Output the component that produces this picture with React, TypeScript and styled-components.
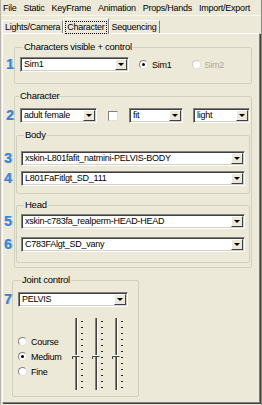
import React from 'react';
import styled, { createGlobalStyle } from 'styled-components';

const GlobalStyle = createGlobalStyle`
  html, body {
    margin: 0;
    padding: 0;
    background: #ece9d8;
  }
  body {
    font-family: "Liberation Sans", Arial, sans-serif;
    font-size: 9px;
    letter-spacing: -0.25px;
    color: #000;
  }
`;

const Window = styled.div`
  width: 262px;
  height: 405px;
  box-sizing: border-box;
  background: #ece9d8;
  border-left: 1px solid #b8b5a8;
  border-right: 1px solid #8a877c;
  display: flex;
  flex-direction: column;
  overflow: hidden;
`;

const MenuBar = styled.div`
  height: 15px;
  display: flex;
  align-items: center;
  gap: 7px;
  padding-left: 2px;
  border-bottom: 1px solid #f7f6f0;
`;

const MenuItem = styled.span`
  line-height: 14px;
`;

const TabStrip = styled.div`
  height: 15px;
  display: flex;
  align-items: flex-end;
  padding-left: 1px;
  margin-top: 2px;
`;

const Tab = styled.div<{ $active?: boolean }>`
  height: ${(p) => (p.$active ? 16 : 13)}px;
  box-sizing: border-box;
  padding: ${(p) => (p.$active ? '2px 1px 0' : '1px 2px 0')};
  border-top: 1px solid #fff;
  border-left: 1px solid #fff;
  border-right: 1px solid #808080;
  background: #ece9d8;
  position: relative;
  z-index: ${(p) => (p.$active ? 2 : 1)};
  margin-bottom: ${(p) => (p.$active ? -1 : 0)}px;
`;

const FocusLabel = styled.span`
  display: inline-block;
  border: 1px dotted #000;
  padding: 0 1px;
  line-height: 11px;
`;

const Panel = styled.div`
  flex: 1;
  margin: 0 1px 2px 1px;
  box-sizing: border-box;
  border-top: 1px solid #fff;
  border-left: 1px solid #fff;
  border-right: 1px solid #808080;
  border-bottom: 1px solid #808080;
  box-shadow: 1px 1px 0 #404040;
  padding: 0 7px 0 0;
  display: flex;
  flex-direction: column;
`;

const Group = styled.fieldset<{ $ml: number; $mt: number; $pad: string; $w?: number }>`
  margin: ${(p) => p.$mt}px 0 0 ${(p) => p.$ml}px;
  padding: ${(p) => p.$pad};
  width: ${(p) => (p.$w ? `${p.$w}px` : 'auto')};
  box-sizing: border-box;
  border: 1px solid #d0d0bf;
  border-radius: 2px;
  min-width: 0;
`;

const Legend = styled.legend`
  padding: 0 1px;
  margin-left: 3px;
  line-height: 12px;
  font-size: 9.5px;
`;

const Row = styled.div<{ $gap?: number; $mt?: number; $ml?: number }>`
  position: relative;
  display: flex;
  align-items: center;
  gap: ${(p) => p.$gap ?? 0}px;
  margin-top: ${(p) => p.$mt ?? 0}px;
  margin-left: ${(p) => p.$ml ?? 0}px;
`;

const Badge = styled.span<{ $left: number }>`
  position: absolute;
  left: ${(p) => p.$left}px;
  top: 0;
  font-family: "Liberation Sans", Arial, sans-serif;
  font-weight: bold;
  font-size: 14px;
  line-height: 15px;
  letter-spacing: 0;
  color: #3a82d4;
  text-shadow: 1px 0 0 #8dbbec;
`;

const ComboBox = styled.div<{ $w?: number }>`
  width: ${(p) => (p.$w ? `${p.$w}px` : 'auto')};
  flex: ${(p) => (p.$w ? '0 0 auto' : '1 1 auto')};
  height: 15px;
  box-sizing: border-box;
  display: flex;
  align-items: stretch;
  background: #fff;
  border-top: 1px solid #808080;
  border-left: 1px solid #808080;
  border-right: 1px solid #fff;
  border-bottom: 1px solid #fff;
  box-shadow: inset 1px 1px 0 #404040, inset -1px -1px 0 #d4d0c8;
`;

const ComboText = styled.span`
  flex: 1;
  padding: 0 0 0 3px;
  line-height: 13px;
  white-space: nowrap;
  overflow: hidden;
`;

const DropButton = styled.span`
  width: 12px;
  margin: 1px 1px 1px 0;
  box-sizing: border-box;
  background: #ece9d8;
  border-top: 1px solid #fff;
  border-left: 1px solid #fff;
  border-right: 1px solid #404040;
  border-bottom: 1px solid #404040;
  display: flex;
  align-items: center;
  justify-content: center;
`;

const Arrow = styled.span`
  width: 0;
  height: 0;
  border-left: 3px solid transparent;
  border-right: 3px solid transparent;
  border-top: 3px solid #000;
`;

const Combo = ({ value, w }: { value: string; w?: number }) => (
  <ComboBox $w={w}>
    <ComboText>{value}</ComboText>
    <DropButton>
      <Arrow />
    </DropButton>
  </ComboBox>
);

const RadioLabel = styled.label<{ $disabled?: boolean }>`
  display: flex;
  align-items: center;
  gap: 4px;
  height: 15px;
  color: ${(p) => (p.$disabled ? '#aca899' : '#000')};
`;

const RadioDot = styled.span<{ $checked?: boolean; $disabled?: boolean }>`
  width: 9px;
  height: 9px;
  box-sizing: border-box;
  border-radius: 50%;
  background: #fff;
  border: 1px solid ${(p) => (p.$disabled ? '#cfcbbd' : '#808080')};
  border-right-color: #e4e1d5;
  border-bottom-color: #e4e1d5;
  display: flex;
  align-items: center;
  justify-content: center;
  &::after {
    content: '';
    width: 3px;
    height: 3px;
    border-radius: 50%;
    background: ${(p) => (p.$checked ? '#000' : 'transparent')};
  }
`;

const Radio = ({ label, checked, disabled }: { label: string; checked?: boolean; disabled?: boolean }) => (
  <RadioLabel $disabled={disabled}>
    <RadioDot $checked={checked} $disabled={disabled} />
    {label}
  </RadioLabel>
);

const CheckBox = styled.span`
  width: 10px;
  height: 10px;
  box-sizing: border-box;
  background: #fff;
  border-top: 1px solid #808080;
  border-left: 1px solid #808080;
  border-right: 1px solid #e4e1d5;
  border-bottom: 1px solid #e4e1d5;
  margin: 0 1px;
`;

const JointBody = styled.div`
  display: flex;
  margin-top: 11px;
`;

const RadioColumn = styled.div`
  display: flex;
  flex-direction: column;
  padding-top: 16px;
  width: 54px;
`;

const Sliders = styled.div`
  display: flex;
  gap: 6px;
`;

const Slider = () => {
  const ticks = Array.from({ length: 12 }, (_, i) => 3 + i * 6);
  return (
    <svg width={14} height={74} viewBox="0 0 14 74">
      <line x1={3.5} y1={0} x2={3.5} y2={72} stroke="#808080" />
      <line x1={4.5} y1={0} x2={4.5} y2={72} stroke="#404040" />
      <line x1={5.5} y1={0} x2={5.5} y2={72} stroke="#ffffff" />
      {ticks.map((y) => (
        <line key={y} x1={9} y1={y + 0.5} x2={11} y2={y + 0.5} stroke="#222" />
      ))}
      <polyline points="0.5,41 0.5,38.5 7.5,38.5" fill="none" stroke="#404040" />
      <line x1={1} y1={37.5} x2={7} y2={37.5} stroke="#ffffff" />
    </svg>
  );
};

const menu = ['File', 'Static', 'KeyFrame', 'Animation', 'Props/Hands', 'Import/Export'];

const App = () => {
  return (
    <>
      <GlobalStyle />
      <Window>
        <MenuBar>
          {menu.map((m) => (
            <MenuItem key={m}>{m}</MenuItem>
          ))}
        </MenuBar>
        <TabStrip>
          <Tab>Lights/Camera</Tab>
          <Tab $active>
            <FocusLabel>Character</FocusLabel>
          </Tab>
          <Tab>Sequencing</Tab>
        </TabStrip>
        <Panel>
          <Group $ml={11} $mt={7} $pad="4px 4px 11px 5px">
            <Legend>Characters visible + control</Legend>
            <Row $gap={10}>
              <Badge $left={-14}>1</Badge>
              <Combo value="Sim1" w={109} />
              <Row $gap={20}>
                <Radio label="Sim1" checked />
                <Radio label="Sim2" disabled />
              </Row>
            </Row>
          </Group>

          <Group $ml={11} $mt={6} $pad="6px 1px 4px 1px">
            <Legend>Character</Legend>
            <Row $gap={10} $ml={4}>
              <Badge $left={-14}>2</Badge>
              <Combo value="adult female" w={77} />
              <CheckBox />
              <Combo value="fit" w={54} />
              <Combo value="light" w={57} />
            </Row>

            <Group $ml={0} $mt={6} $pad="10px 4px 7px 4px">
              <Legend>Body</Legend>
              <Row>
                <Badge $left={-17}>3</Badge>
                <Combo value="xskin-L801fafit_natmini-PELVIS-BODY" />
              </Row>
              <Row $mt={5}>
                <Badge $left={-17}>4</Badge>
                <Combo value="L801FaFitlgt_SD_111" />
              </Row>
            </Group>

            <Group $ml={0} $mt={5} $pad="3px 4px 10px 4px">
              <Legend>Head</Legend>
              <Row>
                <Badge $left={-17}>5</Badge>
                <Combo value="xskin-c783fa_realperm-HEAD-HEAD" />
              </Row>
              <Row $mt={8}>
                <Badge $left={-17}>6</Badge>
                <Combo value="C783FAlgt_SD_vany" />
              </Row>
            </Group>
          </Group>

          <Group $ml={9} $mt={6} $w={127} $pad="6px 6px 4px 5px">
            <Legend>Joint control</Legend>
            <Row>
              <Badge $left={-14}>7</Badge>
              <Combo value="PELVIS" w={110} />
            </Row>
            <JointBody>
              <RadioColumn>
                <Radio label="Course" />
                <Radio label="Medium" checked />
                <Radio label="Fine" />
              </RadioColumn>
              <Sliders>
                <Slider />
                <Slider />
                <Slider />
              </Sliders>
            </JointBody>
          </Group>
        </Panel>
      </Window>
    </>
  );
};

export default App;
